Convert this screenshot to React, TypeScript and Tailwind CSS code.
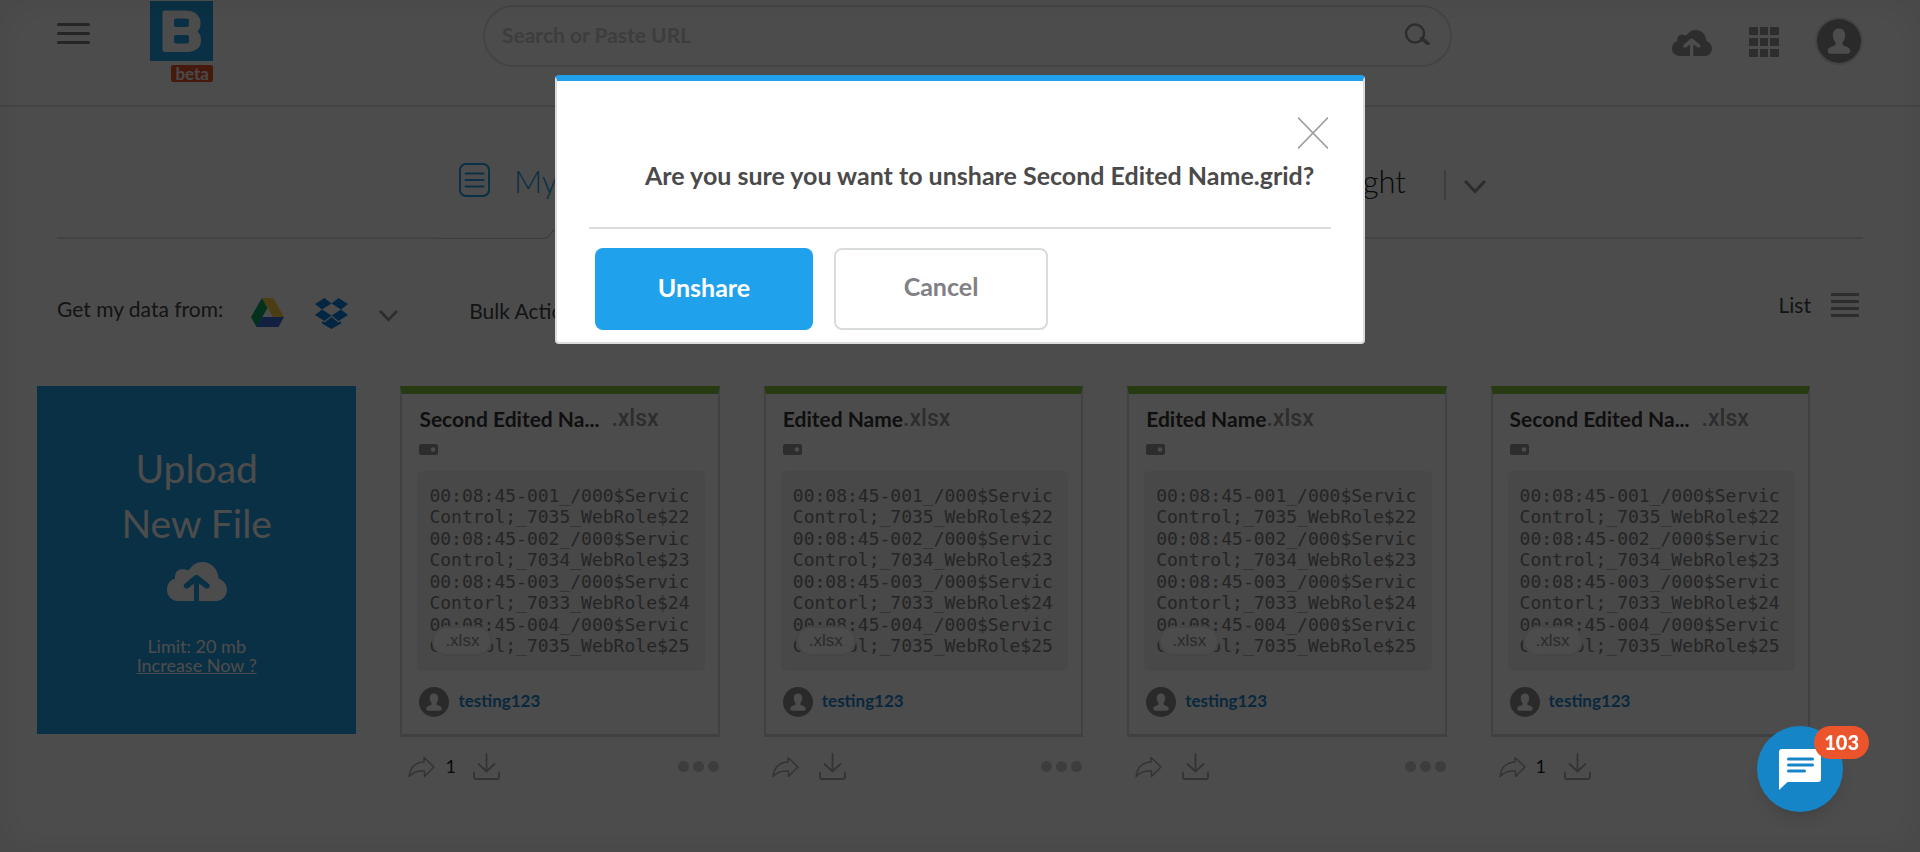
import { useState } from "react";

type FileItem = { name: string; shares?: number };

const files: FileItem[] = [
  { name: "Second Edited Name", shares: 1 },
  { name: "Edited Name" },
  { name: "Edited Name" },
  { name: "Second Edited Name", shares: 1 },
];

const MAX_NAME = 16;

function shorten(name: string) {
  return name.length > MAX_NAME ? name.slice(0, MAX_NAME) + "..." : name;
}

const previewRows = [
  ["00:08:45-001_/000$Servic", "Control;_7035_WebRole$22"],
  ["00:08:45-002_/000$Servic", "Control;_7034_WebRole$23"],
  ["00:08:45-003_/000$Servic", "Contorl;_7033_WebRole$24"],
  ["00:08:45-004_/000$Servic", "Control;_7035_WebRole$25"],
];

function CloudUpload({ className }: { className: string }) {
  return (
    <svg viewBox="0 0 60 39" className={className} aria-hidden="true">
      <path
        fill="currentColor"
        fillRule="evenodd"
        d="M11 39A11 11 0 0 1 0 28C0 22 3 18 8 16.500C7.500 9 12 6.500 18 7.500C20.500 8 21 8.500 22 8C25 3 30 0 35 0C44.500 0 51 7 51.500 16.500C57 18.500 60 23 60 28A11 11 0 0 1 50 39H32V21.500L38 26C41 28 44.500 25 42 22L31.500 13.500C30.200 12.500 28.800 12.500 27.500 13.500L17.500 22C15 25 18.500 28 21.500 26L27 21.500V39Z"
      />
    </svg>
  );
}

function Person({ className }: { className: string }) {
  return (
    <svg viewBox="0 0 30 30" className={className} aria-hidden="true">
      <circle cx="15" cy="15" r="15" fill="#8e8e92" />
      <path
        fill="#fff"
        d="M15 6.500c-2.800 0-4.400 2.200-4.200 5 .1 2.200 1.100 3.700 1.800 4.600.3 1.600-.2 2-1.600 2.500-2.300.7-3.700 1.600-3.700 3.200 0 1.200.9 1.900 2.200 1.900h11c1.300 0 2.200-.7 2.200-1.900 0-1.600-1.400-2.500-3.700-3.200-1.400-.5-1.900-.9-1.600-2.500.7-.9 1.700-2.400 1.800-4.600.2-2.800-1.400-5-4.200-5Z"
      />
    </svg>
  );
}

function Chevron({ className }: { className: string }) {
  return (
    <svg viewBox="0 0 22 14" className={className} aria-hidden="true">
      <path d="M2 2l9 9.500L20 2" fill="none" stroke="currentColor" strokeWidth="3.200" strokeLinecap="round" />
    </svg>
  );
}

function Header() {
  return (
    <header className="flex h-[107px] items-start border-b-2 border-[#e0e0e0] px-[57px]">
      <button aria-label="Menu" className="mt-[23px] flex w-[33px] flex-col gap-[6px]">
        <span className="h-[3px] w-full rounded-full bg-[#7d7d7d]" />
        <span className="h-[3px] w-full rounded-full bg-[#7d7d7d]" />
        <span className="h-[3px] w-full rounded-full bg-[#7d7d7d]" />
      </button>
      <a href="#home" aria-label="Home" className="mt-px ml-[60px] flex flex-col items-end gap-1">
        <svg viewBox="0 0 63 60" className="h-[60px] w-[63px]" aria-hidden="true">
          <rect width="63" height="60" fill="#21a0e3" />
          <path
            fill="#fff"
            fillRule="evenodd"
            d="M12.500 12q0-2.500 2.500-2.500h20c9 0 15.500 4.500 15.500 12.500 0 4-1.200 6.500-3 8.500 2.500 2 3.500 5 3.500 9C51 47 45 51 37 51H15q-2.500 0-2.500-2.500ZM26 17.500q-2 0-2 2v4.500q0 2 2 2h11q2 0 2-2v-4.500q0-2-2-2ZM26 34q-2 0-2 2v4.500q0 2 2 2h11q2 0 2-2V36q0-2-2-2Z"
          />
        </svg>
        <span className="rounded-[2px] bg-[#ec552c] px-1 text-[17px] leading-[17px] font-bold text-[#f5f5f5]">beta</span>
      </a>
      <form className="mt-[5px] ml-[270px] flex h-[62px] flex-1 items-center rounded-full border-2 border-[#e0e0e0] pr-5 pl-[17px]">
        <input
          aria-label="Search or Paste URL"
          placeholder="Search or Paste URL"
          className="min-w-0 flex-1 bg-transparent pb-[2px] text-[21px] font-bold outline-none placeholder:text-[#cccccc]"
        />
        <button aria-label="Search" className="mb-1">
          <svg viewBox="0 0 26 22" className="h-[22px] w-[26px]" fill="none" stroke="#979797" strokeWidth="2.500" aria-hidden="true">
            <circle cx="11" cy="10.500" r="9" />
            <path d="M17.500 15.500l6.500 5" strokeWidth="3.500" strokeLinecap="round" />
          </svg>
        </button>
      </form>
      <nav className="ml-[220px] flex items-start">
        <button aria-label="Upload" className="mt-[30px] text-[#979797]">
          <CloudUpload className="h-[26px] w-10" />
        </button>
        <button aria-label="Apps" className="mt-[27px] ml-[37px] grid w-[30px] grid-cols-3 gap-x-[2px] gap-y-[3px]">
          {Array.from({ length: 9 }, (_, i) => (
            <span key={i} className="h-2 bg-[#979797]" />
          ))}
        </button>
        <button aria-label="Account" className="mt-[17px] ml-9 rounded-full border-2 border-[#e4e4e4]">
          <Person className="size-11" />
        </button>
      </nav>
    </header>
  );
}

function Tabs() {
  return (
    <nav className="relative mx-[57px] flex h-[132px] items-start justify-between border-b-2 border-[#e0e0e0] pr-[377px] pl-[402px]">
      <svg viewBox="0 0 150 40" className="absolute -bottom-[2px] left-[378px] h-10 w-[150px]" aria-hidden="true">
        <path d="M0 38.500H111L150 0V40H0Z" fill="#fff" />
        <path d="M0 39.500H111L150 0" fill="none" stroke="#cccccc" strokeWidth="1.200" />
      </svg>
      <a href="#data" className="relative flex items-start gap-6 text-[31px] font-light text-[#21a0e3]">
        <svg viewBox="0 0 31 34" className="mt-[56px] h-[34px] w-[31px]" fill="none" stroke="currentColor" strokeWidth="2" strokeLinecap="round" aria-hidden="true">
          <rect x="1" y="1" width="29" height="32" rx="6" />
          <path d="M6.500 10.500h18M6.500 17h18M6.500 23.500h18" />
        </svg>
        <span className="mt-[51px]">My Data</span>
      </a>
      <div className="flex items-start">
        <a href="#insight" className="mt-[51px] text-[31px] font-light text-[#222]">Insight</a>
        <span className="mt-[63px] ml-[38px] h-[30px] w-[2px] bg-[#cfcfcf]" />
        <button aria-label="More tabs" className="mt-[73px] ml-[18px] text-[#979797]">
          <Chevron className="h-[14px] w-[22px]" />
        </button>
      </div>
    </nav>
  );
}

function Toolbar() {
  return (
    <div className="mx-[57px] flex h-[147px] items-start pt-14 text-[21px] leading-7 text-[#444]">
      <span>Get my data from:</span>
      <button aria-label="Google Drive" className="mt-[3px] ml-7">
        <svg viewBox="0 0 33 29" className="h-[29px] w-[33px]" aria-hidden="true">
          <path fill="#0aa35c" d="M11 0L0 19l5.500 10L16.500 10Z" />
          <path fill="#ffcf45" d="M11 0h11.500L33 19H21.800Z" />
          <path fill="#3d6fdb" d="M11 19h22l-5.500 10h-22Z" />
        </svg>
      </button>
      <button aria-label="Dropbox" className="mt-[3px] ml-[31px]">
        <svg viewBox="0 0 33 31" className="h-[31px] w-[33px]" fill="#0a7fe0" aria-hidden="true">
          <path d="M9.500 0l7 5.500L7 11.500 0 6ZM23.500 0l-7 5.500 9.500 6L33 6ZM0 17l7-5.500 9.500 6-7 5.500ZM33 17l-7-5.500-9.500 6 7 5.500ZM16.500 19l7 5.500 2.500-1.500v2.500L16.500 31 7 25.500V23l2.500 1.500Z" />
        </svg>
      </button>
      <button aria-label="More sources" className="mt-[15px] ml-[31px] text-[#979797]">
        <Chevron className="h-3 w-[19px]" />
      </button>
      <span className="ml-[71px] pt-[2px]">Bulk Actions</span>
      <button className="-mt-1 ml-auto flex items-center gap-5 pr-1">
        <span>List</span>
        <span className="flex w-7 flex-col gap-1">
          <span className="h-[3px] bg-[#979797]" />
          <span className="h-[3px] bg-[#979797]" />
          <span className="h-[3px] bg-[#979797]" />
          <span className="h-[3px] bg-[#979797]" />
        </span>
      </button>
    </div>
  );
}

function UploadCard() {
  return (
    <div className="flex h-[348px] flex-col items-center bg-[#21a0e3] pt-[55px] text-white">
      <p className="text-center text-[39px] leading-[55px]">
        Upload
        <br />
        New File
      </p>
      <button aria-label="Upload new file" className="mt-[11px]">
        <CloudUpload className="h-[39px] w-[60px]" />
      </button>
      <p className="mt-9 text-lg leading-[19px]">Limit: 20 mb</p>
      <a href="#increase" className="text-lg leading-[19px] underline">Increase Now ?</a>
    </div>
  );
}

function FileCard({ file }: { file: FileItem }) {
  return (
    <article>
      <div className="h-[351px] border-x-2 border-t-8 border-b-[3px] border-x-[#d8dada] border-t-[#86c33a] border-b-[#d3d8d8] px-[15px] pt-[10px]">
        <h2 className="flex items-center px-[2px] text-[21px] leading-[30px] font-bold whitespace-nowrap text-[#333]">
          <span title={file.name}>{shorten(file.name)}</span>
          <span className={file.shares ? "ml-3 font-[Roboto] text-[23px] font-medium text-[#979797]" : "font-[Roboto] text-[23px] font-medium text-[#979797]"}>.xlsx</span>
        </h2>
        <svg viewBox="0 0 19 11" className="mt-[10px] ml-[2px] h-[11px] w-[19px]" aria-hidden="true">
          <rect width="19" height="11" rx="2" fill="#979797" />
          <circle cx="14" cy="5.500" r="2.200" fill="#fff" />
        </svg>
        <div className="relative mt-4 mr-[-2px] h-[200px] rounded-[5px] bg-[#f0f0f0] pt-[14px] pl-3">
          {previewRows.map(([first, second]) => (
            <p key={first} className="mb-px font-['DejaVu_Sans_Mono',monospace] text-lg leading-[21px] whitespace-nowrap text-[#7c7c7c]">
              {first}
              <br />
              {second}
            </p>
          ))}
          <span className="absolute bottom-[15px] left-[15px] rounded-full border-2 border-[#ececec] bg-white px-[11px] font-['Liberation_Sans',sans-serif] text-[17px] leading-[26px] text-[#8f8f8f]">
            .xlsx
          </span>
        </div>
        <div className="mt-4 ml-[2px] flex items-center gap-[9px]">
          <Person className="size-[30px]" />
          <a href="#user" className="pb-[2px] text-[17px] font-bold text-[#1f86cc]">testing123</a>
        </div>
      </div>
      <div className="flex items-center pt-4 pr-px pl-2">
        <button aria-label="Share">
          <svg viewBox="0 0 27 22" className="h-[22px] w-[27px]" fill="none" stroke="#a8aaac" strokeWidth="1.500" strokeLinejoin="round" aria-hidden="true">
            <path d="M16 1.500L26 11 16.500 20.500V15C9 14.500 5 16 1 20.500 2 12 7 6.500 16 6Z" />
          </svg>
        </button>
        <span className={file.shares ? "w-[38px] pl-[10px] text-lg leading-[27px] text-[#222]" : "w-5"}>{file.shares}</span>
        <button aria-label="Download">
          <svg viewBox="0 0 27 27" className="size-[27px]" fill="none" stroke="#a8aaac" strokeWidth="1.800" strokeLinecap="round" aria-hidden="true">
            <path d="M13.500 1v17M5.500 11l8 7.500 8-7.500M1 19.500V24q0 2 2 2h21q2 0 2-2v-4.500" />
          </svg>
        </button>
        <button aria-label="More actions" className="ml-auto flex gap-1">
          <span className="size-[11px] rounded-full bg-[#c9cdcb]" />
          <span className="size-[11px] rounded-full bg-[#c9cdcb]" />
          <span className="size-[11px] rounded-full bg-[#c9cdcb]" />
        </button>
      </div>
    </article>
  );
}

function UnshareDialog({ onClose }: { onClose: () => void }) {
  return (
    <div className="fixed inset-0 flex items-start justify-center bg-black/70 pt-[75px] shadow-[inset_0_0_40px_rgba(0,0,0,0.08)]">
      <div role="dialog" aria-modal="true" aria-labelledby="unshare-title" className="flex w-[810px] flex-col rounded-[4px] border-2 border-t-[6px] border-[#dcdcdc] border-t-[#20a1ec] bg-white px-8 pt-9 pb-3">
        <button aria-label="Close" onClick={onClose} className="mr-[3px] self-end">
          <svg viewBox="0 0 30 32" className="h-8 w-[30px]" fill="none" stroke="#a0a0a0" strokeWidth="1.600" aria-hidden="true">
            <path d="M0 0.500L30 31.500M30 0.500L0 31.500" />
          </svg>
        </button>
        <h1 id="unshare-title" className="mt-2 border-b-2 border-[#dcdcdc] pb-[34px] pl-14 text-[25px] leading-9 font-bold text-[#4a4a4a]">
          Are you sure you want to unshare Second Edited Name.grid?
        </h1>
        <div className="mt-[19px] flex gap-[21px] pl-[6px] text-[25px] font-bold">
          <button onClick={onClose} className="h-[82px] w-[218px] rounded-lg bg-[#20a1ec] pb-[2px] text-white">Unshare</button>
          <button onClick={onClose} className="h-[82px] w-[214px] rounded-lg border-2 border-[#d9dcdc] pb-1 text-[#808085]">Cancel</button>
        </div>
      </div>
    </div>
  );
}

export default function App() {
  const [dialogOpen, setDialogOpen] = useState(true);
  return (
    <div className="min-h-screen bg-white font-[Lato,sans-serif]">
      <Header />
      <Tabs />
      <Toolbar />
      <main className="grid grid-cols-5 gap-11 pr-[110px] pl-[37px]">
        <UploadCard />
        {files.map((file, i) => (
          <FileCard key={i} file={file} />
        ))}
      </main>
      {dialogOpen && <UnshareDialog onClose={() => setDialogOpen(false)} />}
      <button aria-label="Messages, 103 unread" className="fixed right-[77px] bottom-10 flex size-[86px] items-center justify-center rounded-full bg-[#1585c7] shadow-lg">
        <svg viewBox="0 0 42 41" className="h-[41px] w-[42px]" aria-hidden="true">
          <path fill="#fff" d="M3 0h36q3 0 3 3v27q0 3-3 3H8.500L0 41V3q0-3 3-3Z" />
          <path d="M9.500 10h24M9.500 16h24M9.500 22h16" stroke="#1585c7" strokeWidth="3" strokeLinecap="round" />
        </svg>
        <span className="absolute top-0 -right-[26px] rounded-full bg-[#ec552c] px-[10px] text-xl leading-[33px] font-black text-white">103</span>
      </button>
    </div>
  );
}
